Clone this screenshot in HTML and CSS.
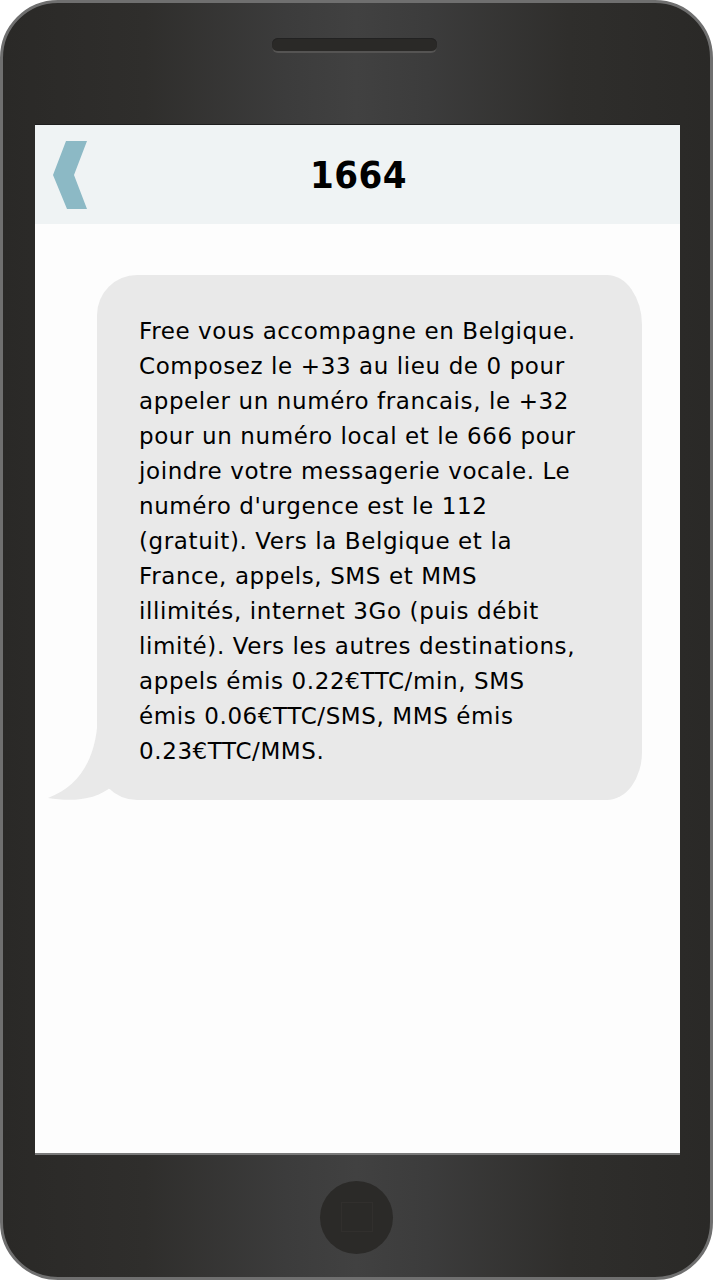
FILE: index.html
```html
<!DOCTYPE html>
<html lang="fr">
<head>
<meta charset="utf-8">
<title>1664</title>
<link rel="stylesheet" href="styles.css">
</head>
<body>
<div class="phone">
  <div class="speaker"></div>
  <div class="screen">
    <header class="bar">
      <svg class="back" width="36" height="70" viewBox="0 0 36 70" aria-hidden="true">
        <polygon points="14,0 35,0 22,34 35,68 15,68 1,34" fill="#8cb9c5"/>
      </svg>
      <h1 class="title">1664</h1>
    </header>
    <main class="thread">
      <div class="bubble">
        <svg class="tail" width="70" height="90" viewBox="0 0 70 90" aria-hidden="true">
          <path d="M51,0 C51,45 35,75 1,88 C25,92 50,90 65,76 L65,0 Z" fill="#e9e9e9"/>
        </svg>
        <p class="msg">Free vous accompagne en Belgique.<br>Composez le +33 au lieu de 0 pour<br>appeler un numéro francais, le +32<br>pour un numéro local et le 666 pour<br>joindre votre messagerie vocale. Le<br>numéro d'urgence est le 112<br>(gratuit). Vers la Belgique et la<br>France, appels, SMS et MMS<br>illimités, internet 3Go (puis débit<br>limité). Vers les autres destinations,<br>appels émis 0.22€TTC/min, SMS<br>émis 0.06€TTC/SMS, MMS émis<br>0.23€TTC/MMS.</p>
      </div>
    </main>
  </div>
  <div class="chin">
    <div class="home"><div class="home-square"></div></div>
  </div>
</div>
</body>
</html>
```

FILE: styles.css
```css
* { box-sizing: border-box; }
html, body { margin: 0; padding: 0; background: #ffffff; }
body { width: 713px; height: 1280px; overflow: hidden; }

.phone {
  width: 713px;
  height: 1280px;
  border: 3px solid #6f6f6f;
  border-radius: 58px;
  background: linear-gradient(to right, #2a2927 0%, #2f2e2c 20%, #3c3c3c 40%, #414141 50%, #3c3c3c 60%, #2f2e2c 80%, #2a2927 100%);
  display: flex;
  flex-direction: column;
  align-items: stretch;
}

.speaker {
  align-self: flex-start;
  margin: 35px 0 0 269px;
  width: 165px;
  height: 15px;
  border-radius: 6px;
  background: #2a2927;
  border-bottom: 2px solid #555453;
  box-shadow: inset 0 1px 0 #222;
}

.screen {
  margin: 71px 30px 0 32px;
  height: 1031px;
  background: #fdfdfd;
  border-top: 1px solid #1e1e1e;
  border-bottom: 2px solid #7a7a7a;
  display: flex;
  flex-direction: column;
}

.bar {
  height: 99px;
  background: #eff3f4;
  display: flex;
  align-items: center;
  justify-content: center;
  position: relative;
}

.back {
  position: absolute;
  left: 17px;
  top: 16px;
}

.title {
  margin: 0 0 0 2px;
  font-family: "DejaVu Sans Condensed", "DejaVu Sans", sans-serif;
  font-stretch: condensed;
  font-weight: bold;
  font-size: 38px;
  line-height: 1;
  color: #000;
  letter-spacing: 0.5px;
}

.thread {
  flex: 1;
  padding: 51px 0 0 62px;
}

.bubble {
  position: relative;
  width: 545px;
  background: #e9e9e9;
  border-radius: 40px 35px 35px 40px / 40px 50px 48px 40px;
  padding: 39px 10px 31px 42px;
}

.tail {
  position: absolute;
  left: -50px;
  bottom: 0;
}

.msg {
  position: relative;
  margin: 0;
  font-family: "DejaVu Sans", sans-serif;
  font-size: 23px;
  letter-spacing: 0.6px;
  line-height: 35px;
  color: #000;
  white-space: nowrap;
}

.chin {
  flex: 1;
  display: flex;
  align-items: center;
  justify-content: center;
  padding: 2px 0 0 0;
}

.home {
  width: 73px;
  height: 73px;
  border-radius: 50%;
  background: #2b2a28;
  display: flex;
  align-items: center;
  justify-content: center;
}

.home-square {
  width: 32px;
  height: 30px;
  border: 1px solid #312f2d;
}
```
